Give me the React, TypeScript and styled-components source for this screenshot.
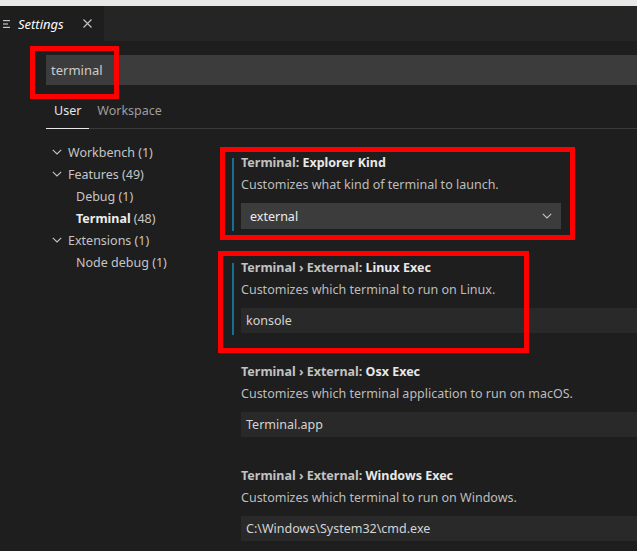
import React from "react";
import styled, { createGlobalStyle } from "styled-components";

const Global = createGlobalStyle`
  html, body { margin: 0; padding: 0; background: #1e1e1e; overflow: hidden; }
  body { font-family: "Noto Sans", "Open Sans", sans-serif; font-size: 12.5px; color: #cccccc; }
  * { box-sizing: border-box; }
`;

const Page = styled.div`
  position: relative;
  width: 637px;
  height: 551px;
  overflow: hidden;
  background: #1e1e1e;
`;

const TopStrip = styled.div`
  height: 6px;
  background: #e8e8e7;
`;

const TabBar = styled.div`
  height: 35px;
  background: #252526;
  display: flex;
`;

const EditorTab = styled.div`
  width: 104px;
  background: #1e1e1e;
  display: flex;
  align-items: center;
  padding-left: 3px;
  color: #ffffff;
`;

const TabTitle = styled.span`
  font-style: italic;
  font-size: 13px;
  margin-left: 7px;
  flex: 1;
`;

const CloseIcon = styled.svg`
  margin-right: 12px;
`;

const SearchBox = styled.div`
  margin: 14px 0 0 46px;
  height: 30px;
  background: #3c3c3c;
  display: flex;
  align-items: center;
  padding-left: 5px;
  font-size: 13px;
  color: #cccccc;
`;

const ScopeTabs = styled.div`
  margin: 17px 0 0 46px;
  display: flex;
  border-bottom: 1px solid #3a3a3a;
`;

const ScopeTab = styled.div<{ $active?: boolean }>`
  padding: 0 8px 8px;
  line-height: 18px;
  margin-bottom: -1px;
  color: ${(p) => (p.$active ? "#e7e7e7" : "#9d9d9d")};
  border-bottom: 1px solid ${(p) => (p.$active ? "#e7e7e7" : "transparent")};
`;

const Body = styled.div`
  display: flex;
`;

const Tree = styled.div`
  width: 232px;
  flex: none;
  padding: 12px 0 0 52px;
`;

const TreeRow = styled.div<{ $indent?: boolean }>`
  height: 22px;
  display: flex;
  align-items: center;
  padding-left: ${(p) => (p.$indent ? "24px" : "0")};
  color: #c5c5c5;
  white-space: nowrap;
`;

const Chevron = styled.svg`
  width: 10px;
  height: 6px;
  margin-right: 6px;
  flex: none;
`;

const Bold = styled.b`
  color: #ececec;
  font-weight: 700;
  margin-right: 3px;
`;

const SettingsList = styled.div`
  flex: 1;
  padding-top: 9px;
`;

const Setting = styled.div<{ $focused?: boolean }>`
  position: relative;
  padding: 15px 0 14px 9px;
  &::before {
    content: "";
    display: ${(p) => (p.$focused ? "block" : "none")};
    position: absolute;
    left: 0;
    top: 20px;
    bottom: 12px;
    width: 2px;
    background: #1a6e93;
  }
`;

const Title = styled.div`
  line-height: 20px;
  font-weight: 700;
  color: #c2c2c2;
  white-space: nowrap;
`;

const Key = styled.span`
  color: #e8e8e8;
`;

const Description = styled.div`
  margin-top: 2px;
  line-height: 20px;
  color: #bdbdbd;
  white-space: nowrap;
`;

const Select = styled.div`
  margin-top: 8px;
  width: 320px;
  height: 26px;
  background: #3c3c3c;
  display: flex;
  align-items: center;
  justify-content: space-between;
  padding: 0 9px 0 9px;
  color: #ececec;
`;

const TextInput = styled.div`
  margin-top: 8px;
  height: 25px;
  background: #292929;
  display: flex;
  align-items: center;
  padding: 0 0 1px 5px;
  color: #d4d4d4;
  white-space: nowrap;
`;

const Highlight = styled.div`
  position: absolute;
  border: 5px solid #ff0000;
  pointer-events: none;
`;

const ChevronDown = ({ color = "#c5c5c5" }: { color?: string }) => (
  <Chevron viewBox="0 0 10 6">
    <path d="M0.8 0.8 L5 5 L9.2 0.8" fill="none" stroke={color} strokeWidth="1.1" />
  </Chevron>
);

type SettingData = {
  category: string;
  keyName: string;
  description: string;
  value: string;
  select?: boolean;
  focused?: boolean;
};

const settings: SettingData[] = [
  {
    category: "Terminal: ",
    keyName: "Explorer Kind",
    description: "Customizes what kind of terminal to launch.",
    value: "external",
    select: true,
    focused: true,
  },
  {
    category: "Terminal › External: ",
    keyName: "Linux Exec",
    description: "Customizes which terminal to run on Linux.",
    value: "konsole",
    focused: true,
  },
  {
    category: "Terminal › External: ",
    keyName: "Osx Exec",
    description: "Customizes which terminal application to run on macOS.",
    value: "Terminal.app",
  },
  {
    category: "Terminal › External: ",
    keyName: "Windows Exec",
    description: "Customizes which terminal to run on Windows.",
    value: "C:\\Windows\\System32\\cmd.exe",
  },
];

export default function App() {
  return (
    <Page>
      <Global />
      <TopStrip />
      <TabBar>
        <EditorTab>
          <svg width="8" height="10" viewBox="0 0 8 10">
            <rect x="0" y="1" width="7" height="1.2" fill="#c5c5c5" />
            <rect x="0" y="4.4" width="5" height="1.2" fill="#c5c5c5" />
            <rect x="0" y="7.8" width="7" height="1.2" fill="#c5c5c5" />
          </svg>
          <TabTitle>Settings</TabTitle>
          <CloseIcon width="9" height="9" viewBox="0 0 9 9">
            <path d="M0.5 0.5 L8.5 8.5 M8.5 0.5 L0.5 8.5" stroke="#c5c5c5" strokeWidth="1.1" />
          </CloseIcon>
        </EditorTab>
      </TabBar>
      <SearchBox>terminal</SearchBox>
      <ScopeTabs>
        <ScopeTab $active>User</ScopeTab>
        <ScopeTab>Workspace</ScopeTab>
      </ScopeTabs>
      <Body>
        <Tree>
          <TreeRow><ChevronDown />Workbench (1)</TreeRow>
          <TreeRow><ChevronDown />Features (49)</TreeRow>
          <TreeRow $indent>Debug (1)</TreeRow>
          <TreeRow $indent><Bold>Terminal</Bold>(48)</TreeRow>
          <TreeRow><ChevronDown />Extensions (1)</TreeRow>
          <TreeRow $indent>Node debug (1)</TreeRow>
        </Tree>
        <SettingsList>
          {settings.map((s) => (
            <Setting key={s.keyName} $focused={s.focused}>
              <Title>
                {s.category}
                <Key>{s.keyName}</Key>
              </Title>
              <Description>{s.description}</Description>
              {s.select ? (
                <Select>
                  <span>{s.value}</span>
                  <svg width="10" height="6" viewBox="0 0 10 6">
                    <path d="M0.8 0.8 L5 5 L9.2 0.8" fill="none" stroke="#c5c5c5" strokeWidth="1.1" />
                  </svg>
                </Select>
              ) : (
                <TextInput>{s.value}</TextInput>
              )}
            </Setting>
          ))}
        </SettingsList>
      </Body>
      <Highlight style={{ left: 30, top: 46, width: 89, height: 53 }} />
      <Highlight style={{ left: 220, top: 147, width: 355, height: 93 }} />
      <Highlight style={{ left: 218, top: 251, width: 311, height: 102 }} />
    </Page>
  );
}
